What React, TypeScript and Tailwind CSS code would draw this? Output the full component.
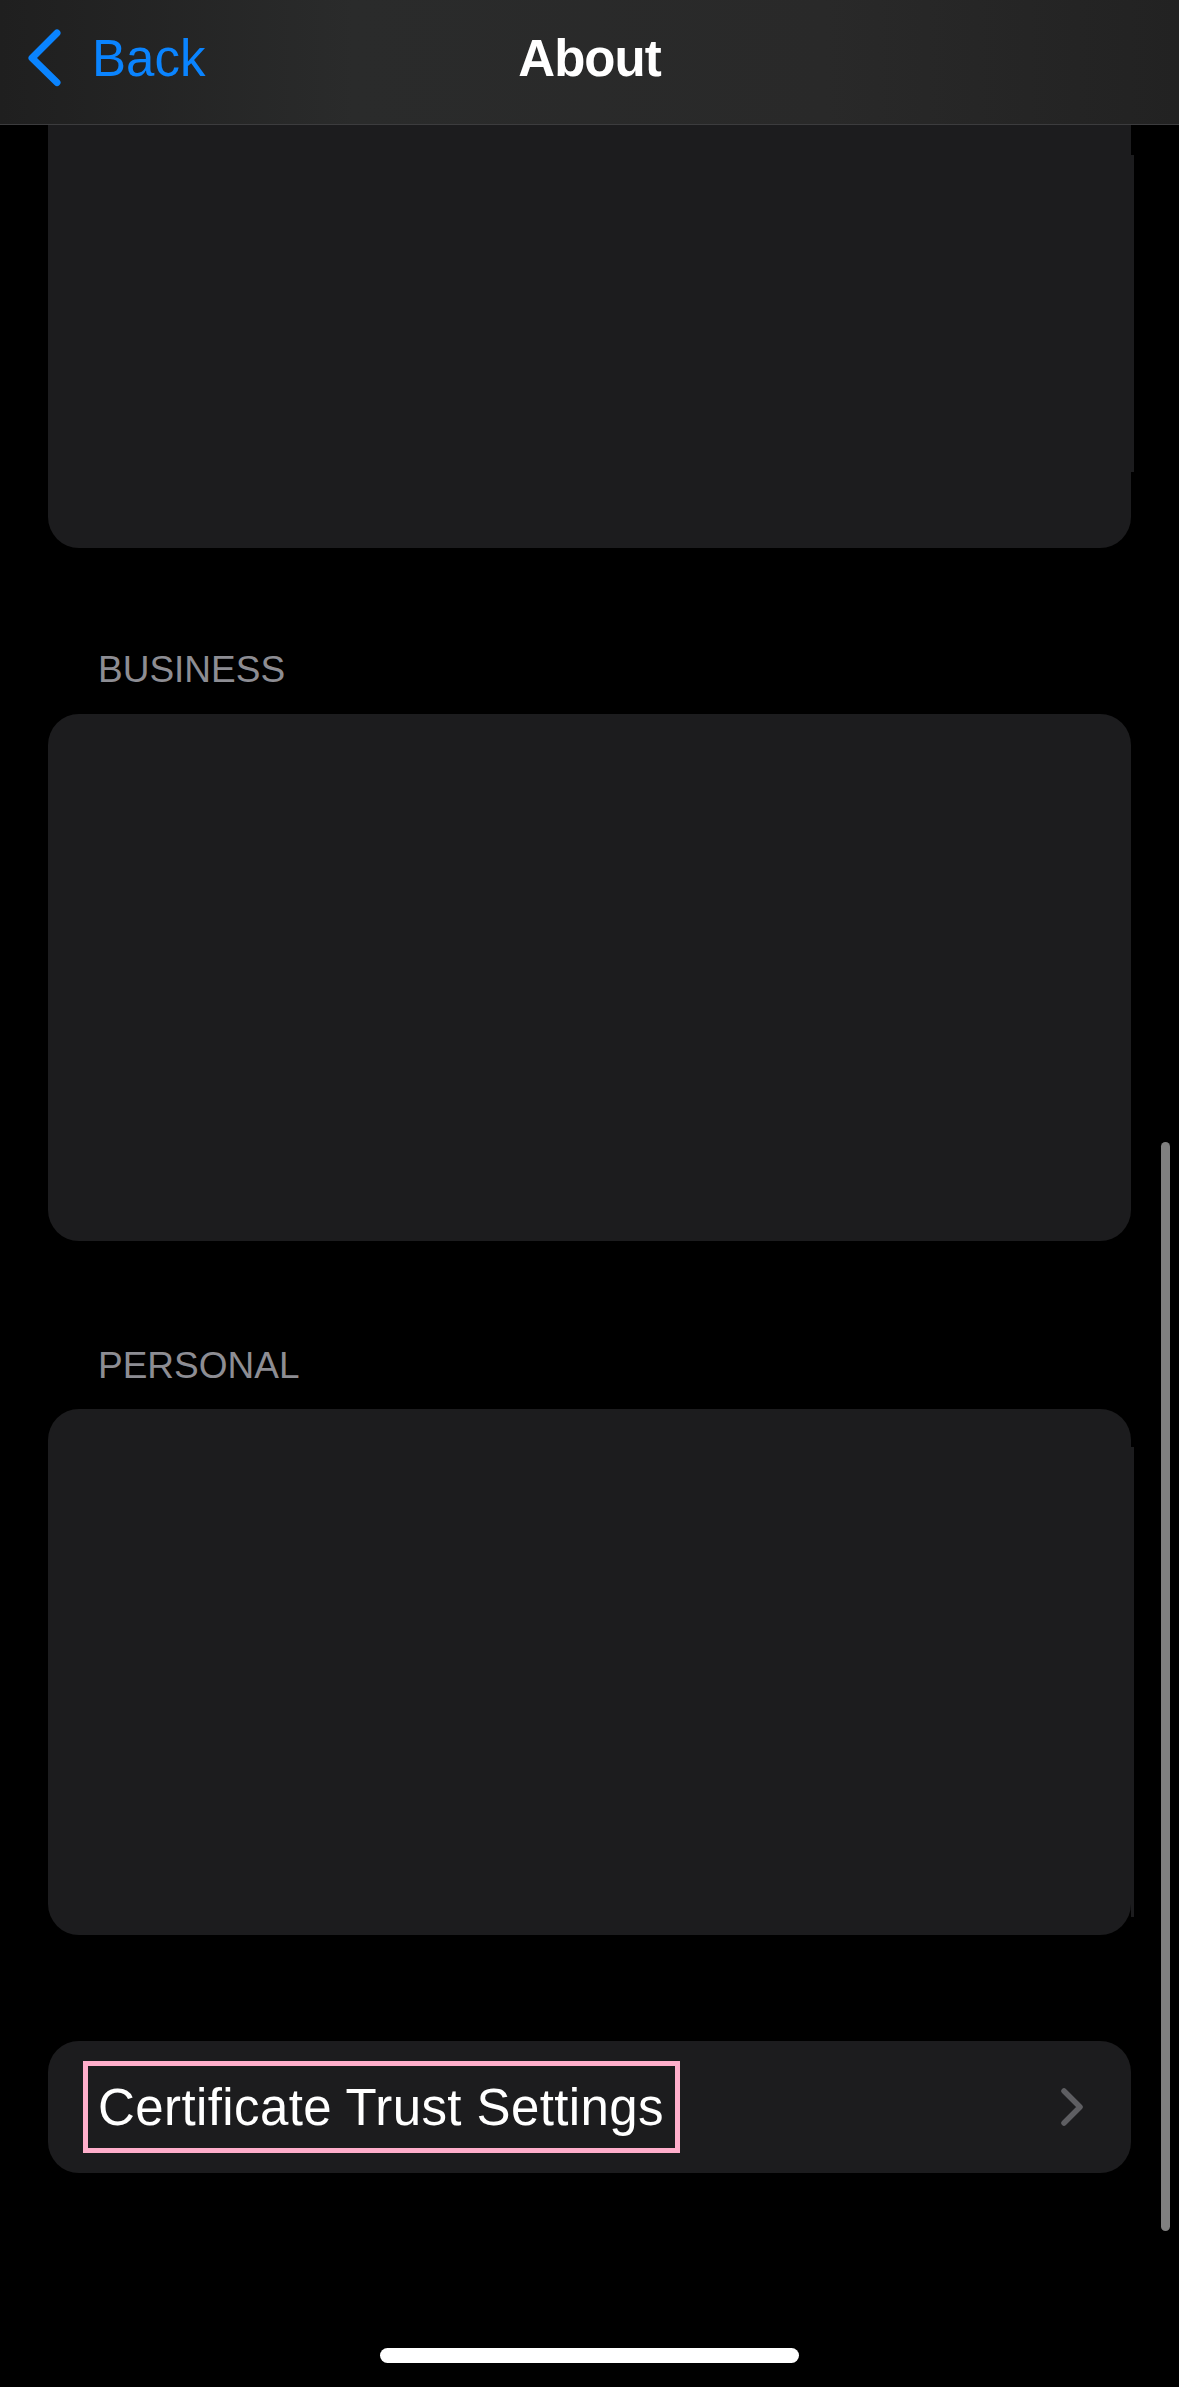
import React from 'react';

const Card: React.FC<{ className?: string; bump?: { top: number; height: number } }> = ({ className = '', bump }) => {
  return (
    <div className={`relative bg-[#1c1c1e] ${className}`}>
      {bump && (
        <div
          className="absolute right-[-3px] w-[3px] bg-[#1c1c1e]"
          style={{ top: bump.top, height: bump.height }}
        />
      )}
    </div>
  );
};

const SectionLabel: React.FC<{ children: React.ReactNode; className?: string }> = ({ children, className = '' }) => (
  <div className={`pl-[50px] text-[37px] leading-[44px] text-[#8d8d93] ${className}`}>{children}</div>
);

const App: React.FC = () => {
  return (
    <div className="relative w-[1179px] h-[2387px] overflow-hidden bg-black font-['Liberation_Sans',Arial,sans-serif]">
      {/* nav bar */}
      <header className="h-[125px] pt-[24px] border-b border-[#3c3c3e] bg-[linear-gradient(90deg,#1f1f1f_0%,#2a2b2b_30%,#292929_70%,#222222_100%)]">
        <div className="grid h-[57px] grid-cols-[1fr_auto_1fr] items-center">
          <div className="flex items-center pl-[24px]">
            <svg width="40" height="68" viewBox="0 0 40 68" fill="none">
              <path
                d="M33 9 L8 34 L33 58.5"
                stroke="#0a84ff"
                strokeWidth="7"
                strokeLinecap="round"
                strokeLinejoin="round"
              />
            </svg>
            <span className="ml-[28px] text-[51px] leading-[57px] text-[#0a84ff]">Back</span>
          </div>
          <h1 className="text-[51px] leading-[57px] font-bold tracking-[-1px] text-white">About</h1>
          <div />
        </div>
      </header>

      <main className="px-[48px]">
        <Card className="h-[423px] rounded-b-[31px]" bump={{ top: 30, height: 317 }} />

        <SectionLabel className="mt-[100px] mb-[22px]">BUSINESS</SectionLabel>
        <Card className="h-[527px] rounded-[31px]" />

        <SectionLabel className="mt-[103px] mb-[21px]">PERSONAL</SectionLabel>
        <Card className="h-[526px] rounded-[31px]" bump={{ top: 38, height: 470 }} />

        <div className="mt-[106px] flex h-[132px] items-center justify-between rounded-[31px] bg-[#1c1c1e] pl-[35px] pr-[46px]">
          <div className="flex h-[92px] w-[597px] items-center border-[5px] border-[#ffaecb] pl-[10px]">
            <span className="text-[51px] leading-[57px] tracking-[0.4px] text-white">Certificate Trust Settings</span>
          </div>
          <svg width="26" height="42" viewBox="0 0 26 42" fill="none">
            <path
              d="M5 5 L21 21 L5 37"
              stroke="#5e5e62"
              strokeWidth="5.5"
              strokeLinecap="round"
              strokeLinejoin="round"
            />
          </svg>
        </div>
      </main>

      {/* scroll indicator */}
      <div className="absolute left-[1161px] top-[1142px] h-[1089px] w-[9px] rounded-full bg-[#808080]" />

      {/* home indicator */}
      <div className="absolute left-[380px] top-[2348px] h-[15px] w-[419px] rounded-full bg-white" />
    </div>
  );
};

export default App;
